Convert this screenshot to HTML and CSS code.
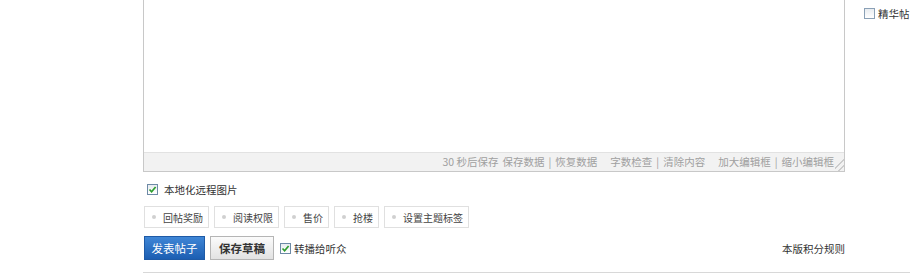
FILE: index.html
```html
<!DOCTYPE html>
<html lang="zh-CN">
<head>
  <meta charset="UTF-8">
  <title>发表帖子</title>
  <link rel="stylesheet" href="styles.css">
</head>
<body>
  <div class="page">
    <div class="main">
      <div class="editor">
        <div class="editor-body"></div>
        <div class="editor-bar">
          <span class="first">30 秒后保存</span>
          <span class="link">保存数据</span><span class="sep">|</span><span class="link">恢复数据</span>
          <span class="gap"></span>
          <span class="link">字数检查</span><span class="sep">|</span><span class="link">清除内容</span>
          <span class="gap"></span>
          <span class="link">加大编辑框</span><span class="sep">|</span><span class="link">缩小编辑框</span>
          <span class="grip"></span>
        </div>
      </div>

      <label class="check-row">
        <span class="cb checked"><svg viewBox="0 0 9 9" width="9" height="9"><path d="M1.5 4.5 L3.6 6.8 L7.6 2" fill="none" stroke="#2e9e2e" stroke-width="1.7"/></svg></span>
        本地化远程图片
      </label>

      <div class="tags">
        <span class="tag"><i></i>回帖奖励</span>
        <span class="tag"><i></i>阅读权限</span>
        <span class="tag"><i></i>售价</span>
        <span class="tag"><i></i>抢楼</span>
        <span class="tag"><i></i>设置主题标签</span>
      </div>

      <div class="actions">
        <button class="btn btn-post">发表帖子</button>
        <button class="btn btn-draft">保存草稿</button>
        <label class="check-row inline">
          <span class="cb checked"><svg viewBox="0 0 9 9" width="9" height="9"><path d="M1.5 4.5 L3.6 6.8 L7.6 2" fill="none" stroke="#2e9e2e" stroke-width="1.7"/></svg></span>
          转播给听众
        </label>
        <a class="rules">本版积分规则</a>
      </div>
    </div>

    <div class="side">
      <label class="check-row">
        <span class="cb"></span>
        精华帖
      </label>
    </div>
  </div>
  <div class="bottom-line"></div>
</body>
</html>
```

FILE: styles.css
```css
body {
  margin: 0;
  font-family: "Noto Sans CJK SC", "Liberation Sans", sans-serif;
  font-size: 10.5px;
  color: #333;
  background: #fff;
  overflow: hidden;
}

.page {
  display: flex;
  padding-left: 143px;
}

.main {
  width: 702px;
  flex-shrink: 0;
}

.editor {
  border: 1px solid #c8c8c8;
  border-top: none;
}

.editor-body {
  height: 152px;
  background: #fff;
}

.editor-bar {
  height: 18px;
  border-top: 1px solid #e2e2e2;
  background: #f2f2f2;
  color: #a0a0a0;
  display: flex;
  align-items: center;
  justify-content: flex-end;
  line-height: 18px;
}

.editor-bar .first {
  margin-right: 4px;
}

.editor-bar .sep {
  margin: 0 4px;
}

.editor-bar .gap {
  width: 13px;
}

.editor-bar .grip {
  width: 9px;
  height: 18px;
  margin-left: 1px;
  background: linear-gradient(135deg, transparent 55%, #ccc 55%, #ccc 62%, transparent 62%, transparent 75%, #ccc 75%, #ccc 82%, transparent 82%);
}

.check-row {
  display: flex;
  align-items: center;
  gap: 6px;
  color: #333;
  margin-top: 10px;
  margin-left: 4px;
  height: 14px;
  white-space: nowrap;
}

.check-row.inline {
  margin: 0 0 0 6px;
  gap: 3px;
}

.cb {
  flex-shrink: 0;
  width: 11px;
  height: 11px;
  box-sizing: border-box;
  border: 1px solid #6d8aa6;
  background: linear-gradient(#e8ecf0, #fff);
  display: flex;
  align-items: center;
  justify-content: center;
}

.tags {
  display: flex;
  gap: 5px;
  margin-top: 10px;
  margin-left: 1px;
}

.tag {
  display: flex;
  align-items: center;
  height: 20px;
  border: 1px solid #e0e0e0;
  padding: 0 5px 0 7px;
  color: #444;
  font-size: 10px;
}

.tag i {
  width: 4px;
  height: 4px;
  border-radius: 50%;
  background: #d0d0d0;
  margin-right: 7px;
}

.actions {
  display: flex;
  align-items: center;
  margin-top: 8px;
  margin-left: 1px;
}

.btn {
  font-family: inherit;
  font-size: 11.5px;
  height: 24px;
  padding: 0;
  cursor: pointer;
}

.btn-post {
  width: 61px;
  border: 1px solid #1e5aa6;
  background: linear-gradient(#3f86d6, #1c5eb2);
  color: #fff;
}

.btn-draft {
  width: 64px;
  margin-left: 5px;
  border: 1px solid #b5b5b5;
  background: linear-gradient(#fbfbfb, #e2e2e2);
  color: #333;
  font-weight: bold;
}

.rules {
  margin-left: auto;
  color: #333;
  margin-right: 0;
}

.side {
  padding-left: 19px;
  flex-shrink: 0;
}

.side .check-row {
  margin-top: 6px;
  margin-left: 0;
  gap: 3px;
}

.side .cb {
  border-color: #8aa0b6;
}

.bottom-line {
  margin: 12px 0 0 143px;
  border-top: 1px solid #d8d8d8;
}
```
